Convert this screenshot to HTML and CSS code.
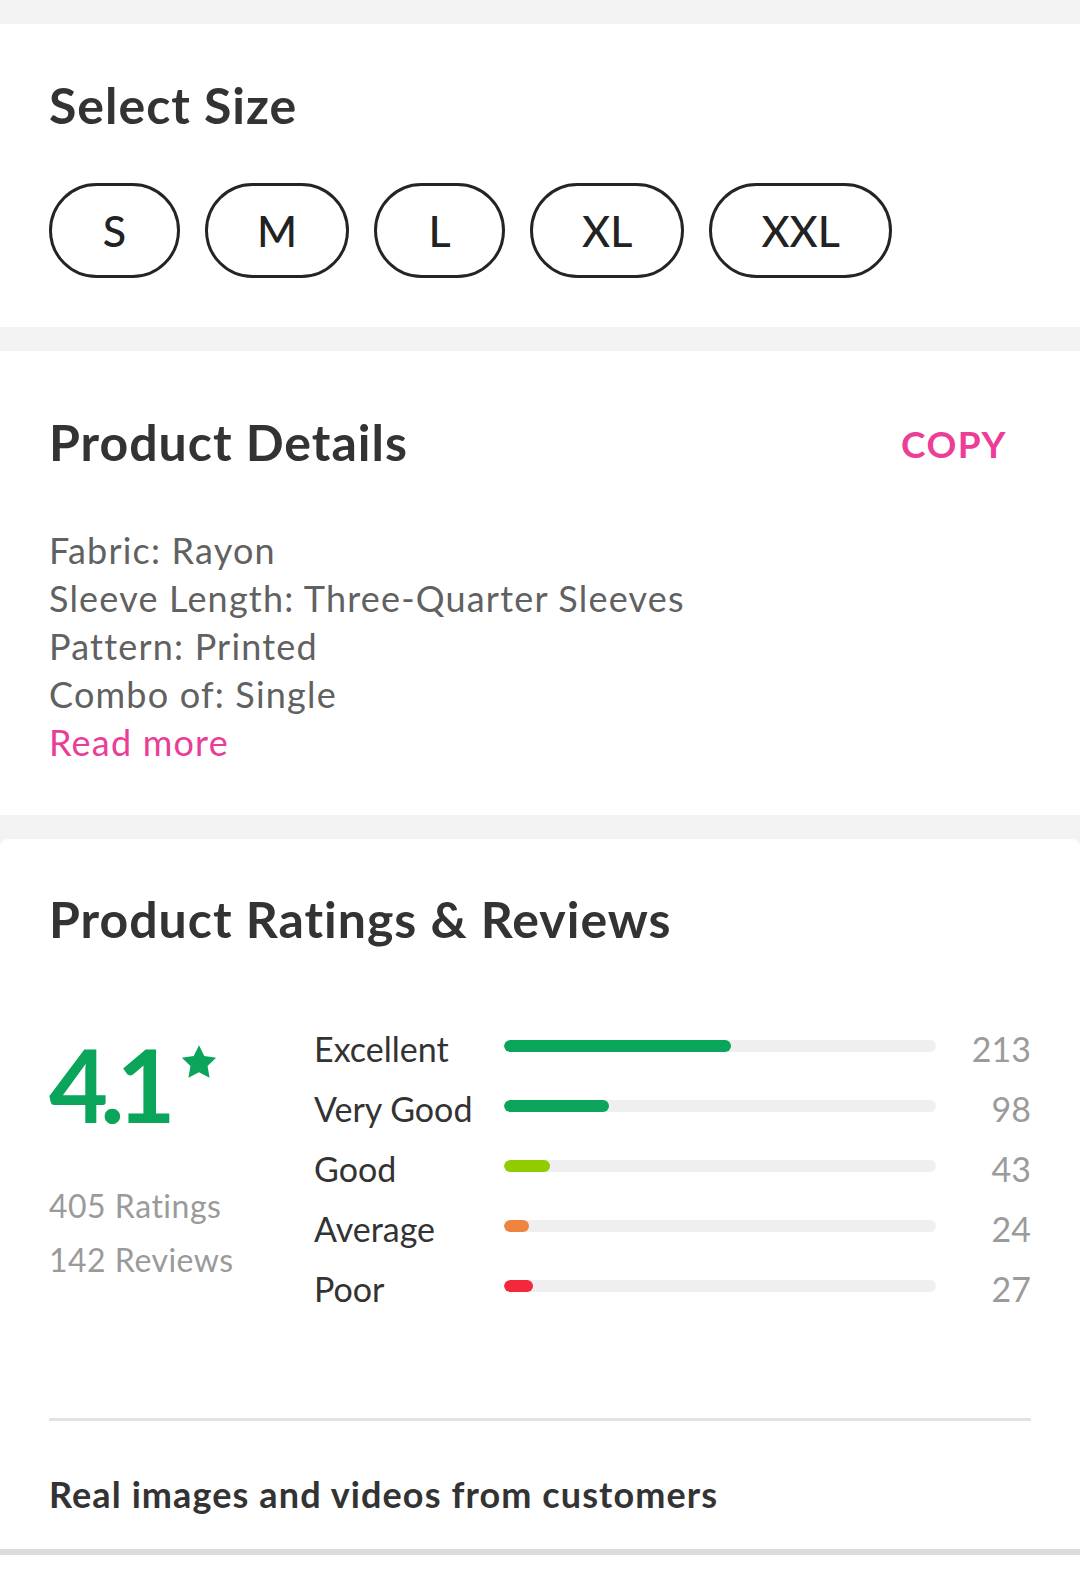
FILE: index.html
```html
<!DOCTYPE html>
<html lang="en">
<head>
<meta charset="utf-8">
<title>Product</title>
<link rel="stylesheet" href="styles.css">
</head>
<body>
<div class="page">
  <section class="card size-card">
    <h2 class="title">Select Size</h2>
    <div class="chips">
      <button class="chip">S</button>
      <button class="chip">M</button>
      <button class="chip">L</button>
      <button class="chip">XL</button>
      <button class="chip">XXL</button>
    </div>
  </section>

  <section class="card details-card">
    <div class="details-head">
      <h2 class="title">Product Details</h2>
      <span class="copy">COPY</span>
    </div>
    <div class="details-body">
      <p>Fabric: Rayon</p>
      <p>Sleeve Length: Three-Quarter Sleeves</p>
      <p>Pattern: Printed</p>
      <p>Combo of: Single</p>
      <p class="read-more">Read more</p>
    </div>
  </section>

  <section class="card ratings-card">
    <h2 class="title">Product Ratings &amp; Reviews</h2>
    <div class="ratings">
      <div class="summary">
        <div class="score">
          <span class="score-num">4.1</span>
          <svg class="star" viewBox="0 0 24 23" width="36" height="35"><path d="M12 0l3.53 7.15 7.89 1.15-5.71 5.56 1.35 7.86L12 18l-7.06 3.72 1.35-7.86L.58 8.3l7.89-1.15z" fill="#0aa55a"/></svg>
        </div>
        <div class="counts-text">405 Ratings</div>
        <div class="counts-text">142 Reviews</div>
      </div>
      <div class="bars">
        <div class="row">
          <span class="label">Excellent</span>
          <div class="track"><div class="fill green" style="width:52.6%"></div></div>
          <span class="num">213</span>
        </div>
        <div class="row">
          <span class="label">Very Good</span>
          <div class="track"><div class="fill green" style="width:24.2%"></div></div>
          <span class="num">98</span>
        </div>
        <div class="row">
          <span class="label">Good</span>
          <div class="track"><div class="fill lime" style="width:10.6%"></div></div>
          <span class="num">43</span>
        </div>
        <div class="row">
          <span class="label">Average</span>
          <div class="track"><div class="fill orange" style="width:5.9%"></div></div>
          <span class="num">24</span>
        </div>
        <div class="row">
          <span class="label">Poor</span>
          <div class="track"><div class="fill red" style="width:6.7%"></div></div>
          <span class="num">27</span>
        </div>
      </div>
    </div>
    <hr class="divider">
    <h3 class="subtitle">Real images and videos from customers</h3>
  </section>
  <div class="bottom-line"></div>
  <div class="bottom-space"></div>
</div>
</body>
</html>
```

FILE: styles.css
```css
* { box-sizing: border-box; }
html, body {
  margin: 0;
  padding: 0;
  background: #f3f3f3;
  font-family: Lato, "Noto Sans", sans-serif;
  color: #333;
}
.page {
  width: 1080px;
  padding-top: 24px;
}
.card {
  background: #fff;
  padding-left: 49px;
  padding-right: 49px;
}
.title {
  margin: 0;
  font-size: 50px;
  line-height: 60px;
  font-weight: 700;
  color: #333;
  letter-spacing: 1px;
}

/* Size */
.size-card {
  padding-top: 51px;
  padding-bottom: 49px;
}
.chips {
  display: flex;
  gap: 25px;
  margin-top: 48px;
}
.chip {
  height: 95px;
  min-width: 131px;
  padding: 0 49px;
  border: 3px solid #242424;
  border-radius: 48px;
  background: #fff;
  font-family: Lato, sans-serif;
  font-size: 43px;
  font-weight: 500;
  color: #222;
  display: flex;
  align-items: center;
  justify-content: center;
}

/* Details */
.details-card {
  margin-top: 24px;
  padding-top: 61px;
  padding-bottom: 49px;
  padding-right: 73px;
}
.details-head {
  display: flex;
  align-items: flex-start;
  justify-content: space-between;
  height: 60px;
}
.copy {
  font-size: 37px;
  line-height: 56px;
  font-weight: 700;
  color: #ec3d97;
  letter-spacing: 1.5px;
  margin-top: 4px;
}
.details-body {
  margin-top: 54px;
}
.details-body p {
  margin: 0;
  font-size: 36px;
  line-height: 48px;
  color: #616161;
  letter-spacing: 1.2px;
}
.details-body .read-more {
  color: #ea3d97;
}

/* Ratings */
.ratings-card {
  margin-top: 24px;
  border-radius: 8px 8px 0 0;
  padding-top: 50px;
  padding-bottom: 31px;
}
.ratings {
  display: flex;
  margin-top: 70px;
}
.summary {
  width: 265px;
  padding-top: 14px;
}
.score {
  display: flex;
  align-items: flex-start;
}
.score-num {
  font-size: 102px;
  line-height: 102px;
  font-weight: 700;
  color: #0aa55a;
  letter-spacing: -8px;
}
.star {
  margin-left: 13px;
  margin-top: 12px;
}
.counts-text {
  font-size: 32px;
  line-height: 54px;
  color: #9a9a9a;
  letter-spacing: 0.5px;
}
.score + .counts-text {
  margin-top: 44px;
}
.bars {
  flex: 1;
  display: flex;
  flex-direction: column;
}
.row {
  display: grid;
  grid-template-columns: 190px 432px 1fr;
  align-items: center;
  height: 60px;
}
.label {
  font-size: 34px;
  line-height: 60px;
  color: #333;
}
.track {
  height: 12px;
  border-radius: 6px;
  background: #efefef;
  margin-top: -6px;
  overflow: hidden;
}
.fill {
  height: 100%;
  border-radius: 6px;
}
.green { background: #0aa55a; }
.lime { background: #91cc00; }
.orange { background: #ee8440; }
.red { background: #f4283b; }
.num {
  text-align: right;
  font-size: 34px;
  line-height: 60px;
  color: #9b9b9b;
}
.divider {
  margin: 99px 0 0;
  border: 0;
  height: 3px;
  background: #e2e2e2;
}
.subtitle {
  margin: 49px 0 0;
  font-size: 36px;
  line-height: 48px;
  font-weight: 700;
  color: #333;
  letter-spacing: 1.1px;
}
.bottom-line {
  height: 6px;
  background: #dcdcdc;
}
.bottom-space {
  height: 40px;
  background: #fff;
}
```
